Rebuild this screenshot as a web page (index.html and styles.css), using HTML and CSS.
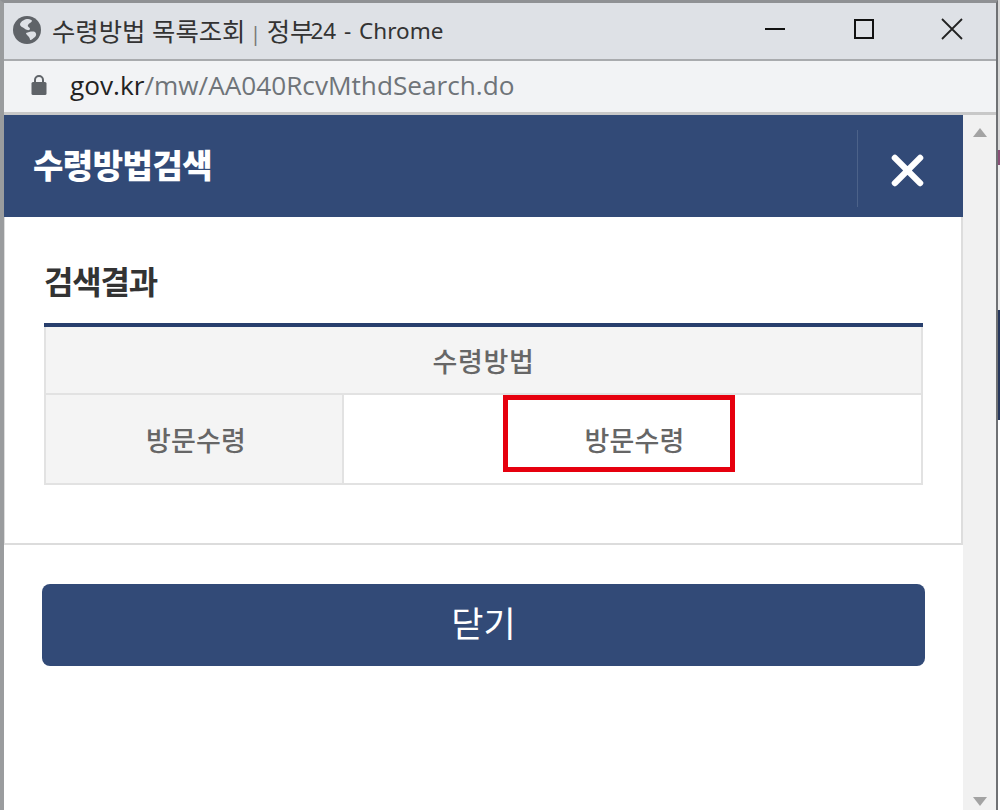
FILE: index.html
```html
<!DOCTYPE html>
<html lang="ko">
<head>
<meta charset="utf-8">
<title>수령방법 목록조회 | 정부24 - Chrome</title>
<link rel="stylesheet" href="styles.css">
</head>
<body>
<div class="window">
  <div class="titlebar">
    <svg class="globe" viewBox="0 0 28 28"><circle cx="14" cy="14" r="14" fill="#5f6368"/><path d="M15 3c-3 0-7 2-8 5 0 3 3 3 5 5 2 1 4 2 5 0 0-2-3-2-2-4 1-2 3-2 4-4 0-1-2-2-4-2zM13 17c3-1 6-2 9-1 1 1 2 3 0 5-2 1-3 3-5 3 0-2-1-3-2-4s-2-2-2-3z" fill="#dee1e6"/></svg>
    <span class="title">수령방법 목록조회 <span class="pipe">|</span> 정부<span class="latin">24 - Chrome</span></span>
    <div class="controls">
      <svg class="ctl" viewBox="0 0 24 24"><path d="M2 12h20" stroke="#111" stroke-width="2" fill="none"/></svg>
      <svg class="ctl" viewBox="0 0 24 24"><rect x="3" y="3" width="18" height="18" stroke="#111" stroke-width="2" fill="none"/></svg>
      <svg class="ctl" viewBox="0 0 24 24"><path d="M2 2l20 20M22 2L2 22" stroke="#222" stroke-width="1.8" fill="none"/></svg>
    </div>
  </div>
  <div class="addressbar">
    <svg class="lock" viewBox="0 0 16 22"><path d="M4 9V6a4 4 0 0 1 8 0v3" stroke="#5f6368" stroke-width="2" fill="none"/><rect x="0.5" y="8" width="15" height="13" rx="1.5" fill="#5f6368"/></svg>
    <span class="url"><span class="host">gov.kr</span>/mw/AA040RcvMthdSearch.do</span>
  </div>
  <div class="viewport">
    <div class="page">
      <div class="popup">
        <header class="popup-head">
          <h1 class="popup-title">수령방법검색</h1>
          <div class="popup-close">
            <svg viewBox="0 0 34 34" class="close-x"><path d="M4 4l26 26M30 4L4 30" stroke="#fff" stroke-width="6.5" stroke-linecap="round" fill="none"/></svg>
          </div>
        </header>
        <div class="popup-body">
          <h2 class="section-title">검색결과</h2>
          <table class="result">
            <colgroup><col class="col-a"><col></colgroup>
            <tr class="head-row"><th colspan="2">수령방법</th></tr>
            <tr class="data-row"><th>방문수령</th><td><span class="mark"></span>방문수령</td></tr>
          </table>
        </div>
      </div>
      <div class="actions"><button class="close-btn" type="button">닫기</button></div>
    </div>
    <div class="scrollbar">
      <span class="arrow up"></span>
      <span class="arrow down"></span>
    </div>
  </div>
</div>
<div class="backdrop"></div>
</body>
</html>
```
FILE: styles.css
```css
* { box-sizing: border-box; }
html, body { margin: 0; padding: 0; background: #fff; overflow: hidden; }
body { font-family: "Noto Sans", "Noto Sans CJK KR", sans-serif; width: 1000px; height: 810px; display: flex; }
.window { width: 998px; height: 810px; flex: none; display: flex; flex-direction: column; border-top: 3px solid #8f9194; border-left: 4px solid #9a9c9e; border-right: 2px solid #6f7174; }
.backdrop { width: 2px; height: 810px; flex: none; background: linear-gradient(#d8d8d8 0 150px, #8a4f76 150px 165px, #ececec 165px 310px, #27375c 310px 420px, #fff 420px); }
.titlebar { height: 58px; flex: none; display: flex; align-items: center; padding: 0 0 3px 9px; background: #dee1e6; border-bottom: 2px solid #a9abae; }
.globe { width: 28px; height: 28px; flex: none; }
.title { margin-left: 11px; font-size: 25.4px; color: #333; white-space: nowrap; letter-spacing: 0; }
.latin { font-size: 22.5px; word-spacing: 2px; margin-left: -3px; vertical-align: 1.5px; }
.pipe { color: #777; font-size: 20px; margin: 0 -1px 0 -2px; }
.controls { margin: -1px 0 0 auto; display: flex; gap: 64.5px; padding-right: 32px; }
.ctl { width: 24px; height: 24px; display: block; }
.addressbar { height: 54px; flex: none; display: flex; align-items: center; background: #f2f3f5; border-bottom: 3px solid #c8c8c8; padding: 0 0 3px 27px; }
.lock { width: 16px; height: 22px; flex: none; }
.url { margin-left: 23px; font-size: 26.2px; color: #6f7479; white-space: nowrap; font-family: "Open Sans", sans-serif; }
.host { color: #222; }
.viewport { flex: 1; display: flex; min-height: 0; }
.page { flex: 1; min-width: 0; display: flex; flex-direction: column; }
.popup { border-left: 1px solid #ddd; border-right: 2px solid #ddd; border-bottom: 2px solid #dcdcdc; height: 430px; }
.popup-head { margin: 0 -2px 0 -1px; height: 102px; background: #324a77; display: flex; align-items: center; justify-content: space-between; padding: 0 0 0 29px; }
.popup-title { margin: 0 0 4px; font-size: 33px; font-weight: 900; color: #fff; letter-spacing: -0.5px; }
.popup-close { width: 106px; height: 77px; border-left: 1px solid #4c6289; margin-top: 5px; display: flex; align-items: center; justify-content: center; padding: 3px 6px 0 0; }
.close-x { width: 33px; height: 33px; }
.popup-body { padding: 0 0 0 39px; }
.section-title { margin: 45px 0 0; font-size: 32px; line-height: 40px; font-weight: 700; color: #333; letter-spacing: -1.2px; height: 61px; }
.result { width: 879px; border-collapse: collapse; border-top: 4px solid #283f6d; table-layout: fixed; font-size: 27px; color: #666; }
.col-a { width: 298px; }
.result th, .result td { border: 2px solid #e2e2e2; text-align: center; font-weight: 500; padding: 0; }
.head-row th { border-top: 0; height: 69px; letter-spacing: 0.6px; }
.data-row th, .data-row td { height: 90px; padding-left: 4px; letter-spacing: 0.2px; }
.result th { background: #f4f4f4; }
.result td { position: relative; }
.mark { position: absolute; left: 159px; top: 0; width: 232px; height: 77px; border: 5px solid #e6000e; }
.actions { padding: 39px 0 0 38px; }
.close-btn { width: 883px; height: 82px; border: 0; border-radius: 8px; background: #324a77; color: #fff; font: 400 35px "Noto Sans", "Noto Sans CJK KR", sans-serif; padding: 0 0 7px; }
.scrollbar { width: 33px; flex: none; background: #f1f1f1; position: relative; }
.arrow { position: absolute; left: 10px; width: 0; height: 0; border-left: 7px solid transparent; border-right: 7px solid transparent; }
.arrow.up { top: 13px; border-bottom: 9px solid #a3a3a3; }
.arrow.down { bottom: 4px; border-top: 9px solid #a3a3a3; }
```
